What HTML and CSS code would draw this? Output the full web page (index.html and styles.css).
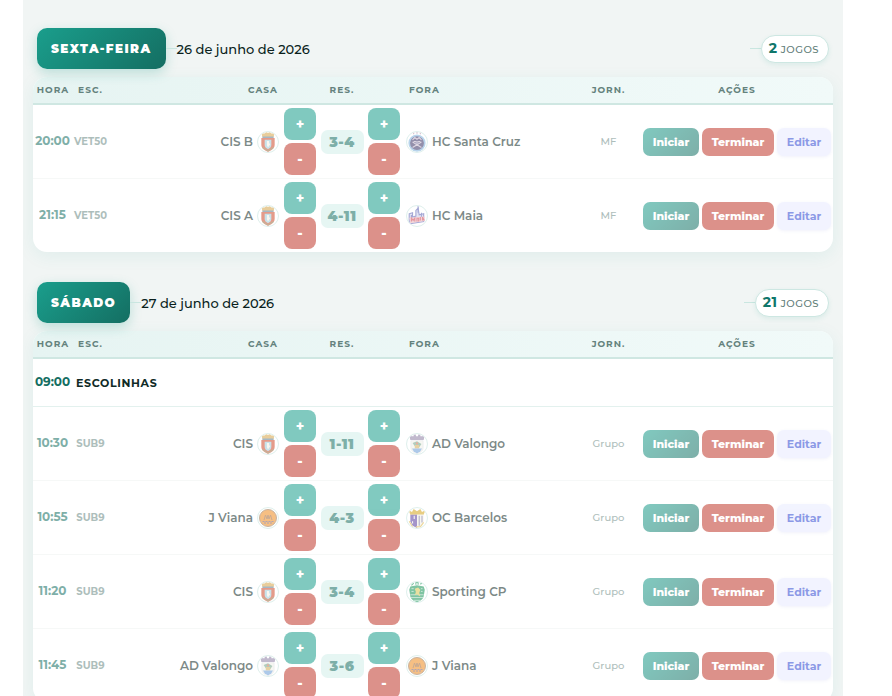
FILE: index.html
```html
<!DOCTYPE html>
<html lang="pt">
<head>
    <meta charset="UTF-8">
    <meta name="viewport" content="width=device-width, initial-scale=1.0">
    <title>Jogos</title>
    <link rel="stylesheet" href="styles.css">
</head>
<body>
    <!-- emblemas dos clubes -->
    <svg class="sprites" aria-hidden="true">
        <symbol id="cis" viewBox="1 1 18 18">
            <path d="M4 1l2.500 1.500L8.500 1 10 2l1.500-1 2 1.500L16 1l-1 5H5z" fill="#d7a64b"/>
            <path d="M5 5h10v1.500H5z" fill="#5c7f96"/>
            <path d="M4 6.500h12v6c0 3-2.500 5-6 6.500-3.500-1.500-6-3.500-6-6.500z" fill="#cf4a2c"/>
            <path d="M7 8h6v4.500c0 2-1 3-3 4-2-1-3-2-3-4z" fill="#9ccbd8"/>
            <path d="M9 9h2v2l1 1-2 3-1-2z" fill="#f4efe5"/>
            <path d="M5 15l5 3 5-3" fill="none" stroke="#8a7c4a"/>
        </symbol>
        <symbol id="santacruz" viewBox="1 1 18 18">
            <circle cx="10" cy="11" r="7" fill="#3b3468" stroke="#7fb2dc" stroke-width="1.500"/>
            <path d="M7 3V1.500M10 2.500V1M13 3V1.500" stroke="#b78ba5"/>
            <path d="M6 8l2-2 2 1.500L12 6l2 2M7 9.500h6M6 15l8-5M6 10l8 5" fill="none" stroke="#c4b6cb"/>
            <circle cx="10" cy="10.500" r="1.500" fill="#8a83a8"/>
        </symbol>
        <symbol id="maia" viewBox="1 1 18 18">
            <path d="M3 8l3-1v4l3-1V5l2-2 1 6 4-1v7L3 17z" fill="#c9cdea" stroke="#5c62b4"/>
            <path d="M11 1v6M5 9v5M14 7v6" stroke="#5c62b4"/>
            <path d="M3 11.500l14-1v4l-13 2z" fill="#e7b3ba"/>
            <path d="M5 15v-3l1.500 2L8 12v3M10 15v-3h1.500v3M13 14v-3M15 14v-3l1.500 3" fill="none" stroke="#cf4455"/>
        </symbol>
        <symbol id="valongo" viewBox="1 1 18 18">
            <path d="M3 2h2v1h2V1.500h2V3h2V1.500h2V3h2V2h2l-1 4.500H4z" fill="#8f80a6"/>
            <path d="M4.500 7h11v6c0 3-2 4.500-5.500 6-3.500-1.500-5.500-3-5.500-6z" fill="#f0f1e8" stroke="#d0d3dc" stroke-width=".5"/>
            <path d="M6 9l4-1.500L14 10l-2 3-4-1z" fill="#72a68b"/>
            <path d="M8 11h4v3H8z" fill="#d2ae59"/>
            <path d="M5.500 14h9l-1.500 2.500-3 2-3-2z" fill="#6b9dd8"/>
            <circle cx="10" cy="9.500" r="1" fill="#d86d4c"/>
        </symbol>
        <symbol id="viana" viewBox="0 0 20 20">
            <circle cx="10" cy="10" r="8.500" fill="#ef8b1f" stroke="#9b7654"/>
            <path d="M6 12l1.500-5L9 11l1-4 1 4 1.500-4 1.500 5" fill="none" stroke="#9c673c"/>
            <path d="M4.500 13.500h11M6 15h8" stroke="#6c5b79" stroke-dasharray="2 1"/>
        </symbol>
        <symbol id="barcelos" viewBox="1 1 18 18">
            <path d="M2.500 3l3 1.500L7 2l3 2 3-2 1.500 2.500 3-1.500-1.500 4H4z" fill="#d6a51d"/>
            <path d="M4 7h6v12l-4-2-2-4z" fill="#5a3fa0"/>
            <path d="M10 7h6v6l-2 4-4 2z" fill="#f1eee7"/>
            <path d="M12 8v9M14.500 8v6" stroke="#777199"/>
            <path d="M7.500 8v3M6 13v2" stroke="#f1eee7"/>
            <path d="M3 13l3 5M9 18h4l3-4" fill="none" stroke="#ddb644"/>
        </symbol>
        <symbol id="sporting" viewBox="1 1 18 18">
            <path d="M5 4l2-2M9 3.500V1.500h2v2M13 3l2-1.500" stroke="#159457" fill="none"/>
            <path d="M4 5l6-1 6 1 1 3-1 6c-1 3-3 4-6 5.500C7 18 5 17 4 14L3 8z" fill="#159457"/>
            <path d="M4 12.500h12M4.500 15h11M7 17.500h6" stroke="#e3f2ec" stroke-width=".6"/>
            <path d="M8 7l3-1 2 2-1 3 1 3-3-2-2 1 1-3z" fill="#d8c650"/>
            <path d="M5 7h2M5 9.500h2M13.500 7H15M13.500 9.500H15" stroke="#e3f2ec" stroke-width=".6"/>
        </symbol>
    </svg>

    <main class="wrap">
        <section class="day">
            <header class="day-header">
                <h2 class="day-badge">SEXTA-FEIRA</h2>
                <span class="line"></span>
                <span class="date">26 de junho de 2026</span>
                <span class="line"></span>
                <span class="count"><strong>2</strong> JOGOS</span>
            </header>
            <table class="games">
                <colgroup><col class="c-hora"><col class="c-esc"><col><col class="c-res"><col><col class="c-jorn"><col class="c-acoes"></colgroup>
                <thead>
                    <tr><th>HORA</th><th>ESC.</th><th class="casa">CASA</th><th>RES.</th><th class="fora">FORA</th><th>JORN.</th><th>AÇÕES</th></tr>
                </thead>
                <tbody>
                    <tr class="done">
                        <td class="hora">20:00</td>
                        <td class="esc">VET50</td>
                        <td class="casa"><div class="team">CIS B <svg class="logo"><use href="#cis"/></svg></div></td>
                        <td><div class="score"><div class="pm"><button class="plus">+</button><button class="minus">-</button></div><span class="res">3-4</span><div class="pm"><button class="plus">+</button><button class="minus">-</button></div></div></td>
                        <td class="fora"><div class="team"><svg class="logo"><use href="#santacruz"/></svg> HC Santa Cruz</div></td>
                        <td class="jorn">MF</td>
                        <td><div class="actions"><button class="start">Iniciar</button><button class="end">Terminar</button><button class="edit">Editar</button></div></td>
                    </tr>
                    <tr class="done">
                        <td class="hora">21:15</td>
                        <td class="esc">VET50</td>
                        <td class="casa"><div class="team">CIS A <svg class="logo"><use href="#cis"/></svg></div></td>
                        <td><div class="score"><div class="pm"><button class="plus">+</button><button class="minus">-</button></div><span class="res">4-11</span><div class="pm"><button class="plus">+</button><button class="minus">-</button></div></div></td>
                        <td class="fora"><div class="team"><svg class="logo"><use href="#maia"/></svg> HC Maia</div></td>
                        <td class="jorn">MF</td>
                        <td><div class="actions"><button class="start">Iniciar</button><button class="end">Terminar</button><button class="edit">Editar</button></div></td>
                    </tr>
                </tbody>
            </table>
        </section>

        <section class="day">
            <header class="day-header">
                <h2 class="day-badge">SÁBADO</h2>
                <span class="line"></span>
                <span class="date">27 de junho de 2026</span>
                <span class="line"></span>
                <span class="count"><strong>21</strong> JOGOS</span>
            </header>
            <table class="games">
                <colgroup><col class="c-hora"><col class="c-esc"><col><col class="c-res"><col><col class="c-jorn"><col class="c-acoes"></colgroup>
                <thead>
                    <tr><th>HORA</th><th>ESC.</th><th class="casa">CASA</th><th>RES.</th><th class="fora">FORA</th><th>JORN.</th><th>AÇÕES</th></tr>
                </thead>
                <tbody>
                    <tr class="event">
                        <td class="hora">09:00</td>
                        <td class="event-name" colspan="6">ESCOLINHAS</td>
                    </tr>
                    <tr class="done">
                        <td class="hora">10:30</td>
                        <td class="esc">SUB9</td>
                        <td class="casa"><div class="team">CIS <svg class="logo"><use href="#cis"/></svg></div></td>
                        <td><div class="score"><div class="pm"><button class="plus">+</button><button class="minus">-</button></div><span class="res">1-11</span><div class="pm"><button class="plus">+</button><button class="minus">-</button></div></div></td>
                        <td class="fora"><div class="team"><svg class="logo"><use href="#valongo"/></svg> AD Valongo</div></td>
                        <td class="jorn">Grupo</td>
                        <td><div class="actions"><button class="start">Iniciar</button><button class="end">Terminar</button><button class="edit">Editar</button></div></td>
                    </tr>
                    <tr class="done">
                        <td class="hora">10:55</td>
                        <td class="esc">SUB9</td>
                        <td class="casa"><div class="team">J Viana <svg class="logo"><use href="#viana"/></svg></div></td>
                        <td><div class="score"><div class="pm"><button class="plus">+</button><button class="minus">-</button></div><span class="res">4-3</span><div class="pm"><button class="plus">+</button><button class="minus">-</button></div></div></td>
                        <td class="fora"><div class="team"><svg class="logo"><use href="#barcelos"/></svg> OC Barcelos</div></td>
                        <td class="jorn">Grupo</td>
                        <td><div class="actions"><button class="start">Iniciar</button><button class="end">Terminar</button><button class="edit">Editar</button></div></td>
                    </tr>
                    <tr class="done">
                        <td class="hora">11:20</td>
                        <td class="esc">SUB9</td>
                        <td class="casa"><div class="team">CIS <svg class="logo"><use href="#cis"/></svg></div></td>
                        <td><div class="score"><div class="pm"><button class="plus">+</button><button class="minus">-</button></div><span class="res">3-4</span><div class="pm"><button class="plus">+</button><button class="minus">-</button></div></div></td>
                        <td class="fora"><div class="team"><svg class="logo"><use href="#sporting"/></svg> Sporting CP</div></td>
                        <td class="jorn">Grupo</td>
                        <td><div class="actions"><button class="start">Iniciar</button><button class="end">Terminar</button><button class="edit">Editar</button></div></td>
                    </tr>
                    <tr class="done">
                        <td class="hora">11:45</td>
                        <td class="esc">SUB9</td>
                        <td class="casa"><div class="team">AD Valongo <svg class="logo"><use href="#valongo"/></svg></div></td>
                        <td><div class="score"><div class="pm"><button class="plus">+</button><button class="minus">-</button></div><span class="res">3-6</span><div class="pm"><button class="plus">+</button><button class="minus">-</button></div></div></td>
                        <td class="fora"><div class="team"><svg class="logo"><use href="#viana"/></svg> J Viana</div></td>
                        <td class="jorn">Grupo</td>
                        <td><div class="actions"><button class="start">Iniciar</button><button class="end">Terminar</button><button class="edit">Editar</button></div></td>
                    </tr>
                </tbody>
            </table>
        </section>
    </main>
</body>
</html>
```
FILE: styles.css
```css
* {
    box-sizing: border-box;
}
body {
    margin: 0;
    padding: 0 49px 0 23px;
    height: 100vh;
    overflow: hidden;
    background: #fff;
    color: #0f2a26;
    font-family: Montserrat, Inter, sans-serif;
    font-size: 12px;
}
.sprites {
    display: none;
}
.wrap {
    height: 100vh;
    overflow-y: auto;
    scrollbar-width: none;
    padding: 28px 10px 0;
    background: #f1f5f4;
}
.day {
    margin-bottom: 30px;
}

/* cabeçalho do dia */
.day-header {
    display: flex;
    align-items: center;
    padding: 0 4px;
    margin-bottom: 8px;
}
.day-badge {
    margin: 0;
    padding: 0 14px;
    font-size: 12px;
    line-height: 41px;
    font-weight: 900;
    letter-spacing: 0.12em;
    color: #fff;
    background: linear-gradient(135deg, #1a9e8c, #146e62);
    border-radius: 10px;
    box-shadow: 0 4px 12px rgba(26, 158, 140, 0.25);
}
.line {
    width: 11px;
    height: 1px;
    background: #c9e6e0;
}
.date {
    flex: 1;
    font-size: 13px;
    font-weight: 500;
    color: #0a1f1c;
}
.count {
    padding: 0 9px 0 7px;
    line-height: 25px;
    font-size: 10px;
    font-weight: 500;
    letter-spacing: 0.05em;
    color: #5f7d78;
    background: #fff;
    border: 1px solid #cde7e2;
    border-radius: 14px;
    box-shadow: 0 2px 5px rgba(26, 158, 140, 0.1);
}
.count strong {
    font-size: 14px;
    font-weight: 700;
    color: #0f766a;
}

/* tabela de jogos */
.games {
    width: 100%;
    table-layout: fixed;
    border-collapse: separate;
    border-spacing: 0;
    background: #fff;
    border-radius: 14px;
    overflow: hidden;
    box-shadow: 0 4px 18px rgba(26, 158, 140, 0.08);
}
.c-hora { width: 40px; }
.c-esc { width: 35px; }
.c-res { width: 120px; }
.c-jorn { width: 65px; }
.c-acoes { width: 192px; }

thead {
    background: linear-gradient(90deg, #e6f4f2, #f1faf9);
}
th {
    height: 28px;
    padding: 0;
    font-size: 9px;
    line-height: 12px;
    font-weight: 700;
    letter-spacing: 1px;
    color: #64827d;
    border-bottom: 2px solid #cfe7e2;
}
td {
    height: 74px;
    padding: 3px 0;
    text-align: center;
    border-bottom: 1px solid #eff3f2;
}
tr:last-child td {
    height: 73px;
    border-bottom: none;
}
.event td {
    height: 48px;
    border-bottom-color: #e3f1ee;
}
th.casa {
    text-align: right;
    padding-right: 4px;
}
th.fora {
    text-align: left;
    padding-left: 7px;
}
td.fora {
    padding-left: 4px;
}
td.casa {
    padding-right: 3px;
}
.done td {
    opacity: 0.55;
}
td.hora {
    padding: 0 1px 3px 0;
    font-weight: 700;
    color: #146e62;
}
.esc {
    font-size: 10px;
    font-weight: 700;
    color: #6b8a85;
}
.jorn {
    font-size: 10px;
    font-weight: 500;
    color: #6b8a85;
}
td.event-name {
    padding-left: 3px;
    text-align: left;
    font-size: 11px;
    font-weight: 700;
    letter-spacing: 0.06em;
}
.team {
    display: flex;
    align-items: center;
    gap: 4px;
    font-size: 12px;
    font-weight: 600;
}
.casa .team {
    justify-content: flex-end;
}
.logo {
    width: 22px;
    height: 22px;
    border: 1px solid #c5e4de;
    border-radius: 50%;
    background: #fff;
}

button {
    border: none;
    padding: 0;
    font-family: inherit;
    font-weight: 700;
    color: #fff;
    cursor: pointer;
}
.score {
    display: flex;
    align-items: center;
    justify-content: space-between;
    padding: 0 2px;
}
.pm {
    display: flex;
    flex-direction: column;
    gap: 3px;
}
.pm button {
    width: 32px;
    height: 32px;
    font-size: 14px;
    font-weight: 800;
    border-radius: 8px;
}
.plus {
    background: #1a9e8c;
}
.minus,
.end {
    background: #c0392b;
}
.res {
    width: 43px;
    font-size: 14px;
    line-height: 24px;
    font-weight: 900;
    letter-spacing: 0.04em;
    color: #146e62;
    background: #d2efeb;
    border-radius: 7px;
}
.actions {
    display: flex;
    justify-content: center;
    gap: 3px;
}
.actions button {
    height: 28px;
    font-size: 11px;
    font-weight: 800;
    border-radius: 7px;
}
.start {
    width: 56px;
    background: linear-gradient(135deg, #1a9e8c, #146e62);
}
.end {
    width: 72px;
}
.actions .edit {
    width: 54px;
    font-weight: 700;
    color: #2e47d2;
    background: #e8ebff;
    box-shadow: 0 1px 3px rgba(56, 67, 208, 0.12);
}
```
